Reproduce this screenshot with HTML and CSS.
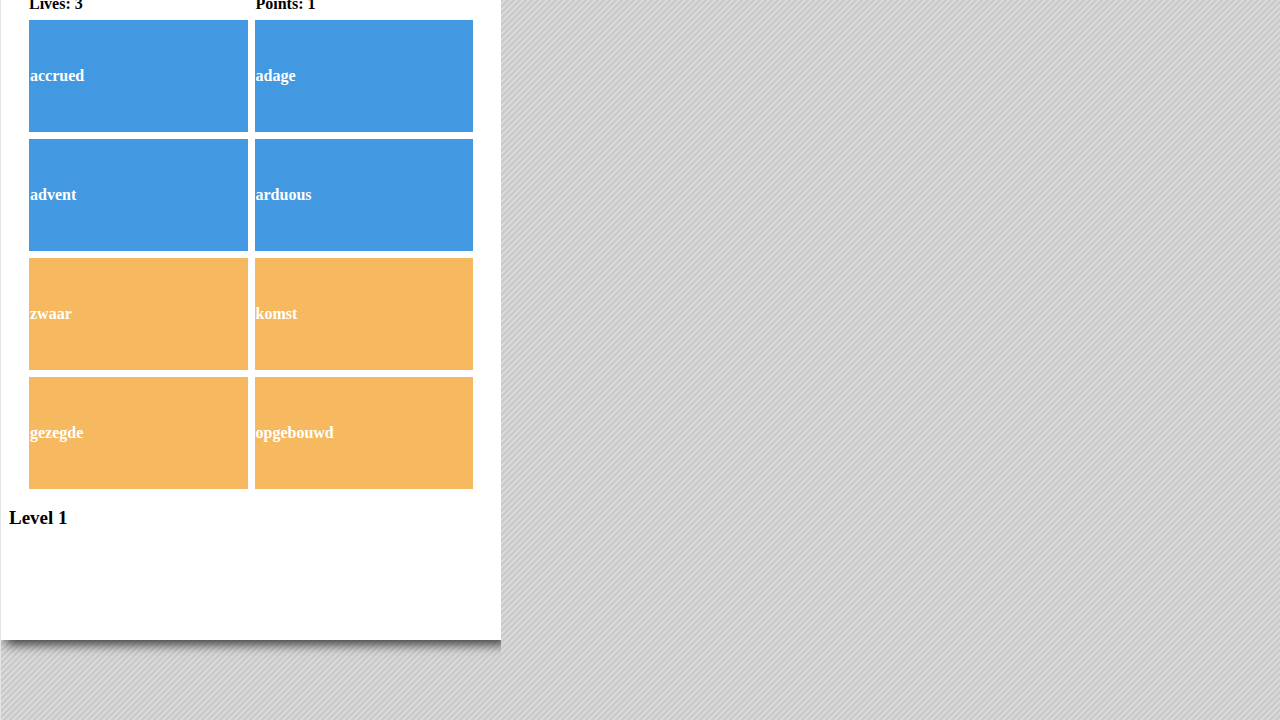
FILE: index.html
```
<!DOCTYPE html>
<html lang="en">
<head>
<meta charset="utf-8">
<title>Word Match</title>
<link rel="stylesheet" href="styles.css">
</head>
<body>
<div class="frame">
  <main class="game">
    <div class="board">
      <header class="status"><span>Lives: 3</span><span class="points">Points: 1</span></header>
      <div class="cards">
        <button class="card" type="button">accrued</button>
        <button class="card" type="button">adage</button>
        <button class="card" type="button">advent</button>
        <button class="card" type="button">arduous</button>
        <button class="card answer" type="button">zwaar</button>
        <button class="card answer" type="button">komst</button>
        <button class="card answer" type="button">gezegde</button>
        <button class="card answer" type="button">opgebouwd</button>
      </div>
    </div>
    <h3 class="level">Level 1</h3>
  </main>
</div>
</body>
</html>
```
FILE: styles.css
```
* {
  box-sizing: border-box;
}

body {
  margin: 0;
  min-height: 100vh;
  font-family: "Liberation Serif", "Times New Roman", serif;
  font-size: 16px;
  background-color: #d3d3d3;
  background-image: linear-gradient(135deg, #dadada 25%, #c9c9c9 25% 50%, #dadada 50% 75%, #c9c9c9 75%);
  background-size: 6px 6px;
}

.frame {
  max-width: 501px;
  min-height: 100vh;
  overflow: hidden;
  border-left: 1px solid #e5e5e5;
}

.game {
  padding: 0 8px 112px;
  background: #fff;
  box-shadow: 5px 5px 10px #444;
}

.board {
  padding: 0 20px;
}

.status,
.cards {
  display: grid;
  grid-template-columns: 1fr 1fr;
  column-gap: 7px;
}

.status {
  height: 20px;
  line-height: 8px;
  font-weight: bold;
}

.points {
  padding-left: 1px;
}

.cards {
  row-gap: 7px;
}

.card {
  min-height: 112px;
  padding: 0 1px;
  border: 0;
  background: #4299e1;
  color: #fff;
  font: bold 16px "Liberation Serif", "Times New Roman", serif;
  text-align: left;
  cursor: pointer;
}

.answer {
  background: #f6b960;
}

.level {
  margin: 0;
  padding-top: 18px;
  font-size: 19px;
  line-height: 21px;
}
```
